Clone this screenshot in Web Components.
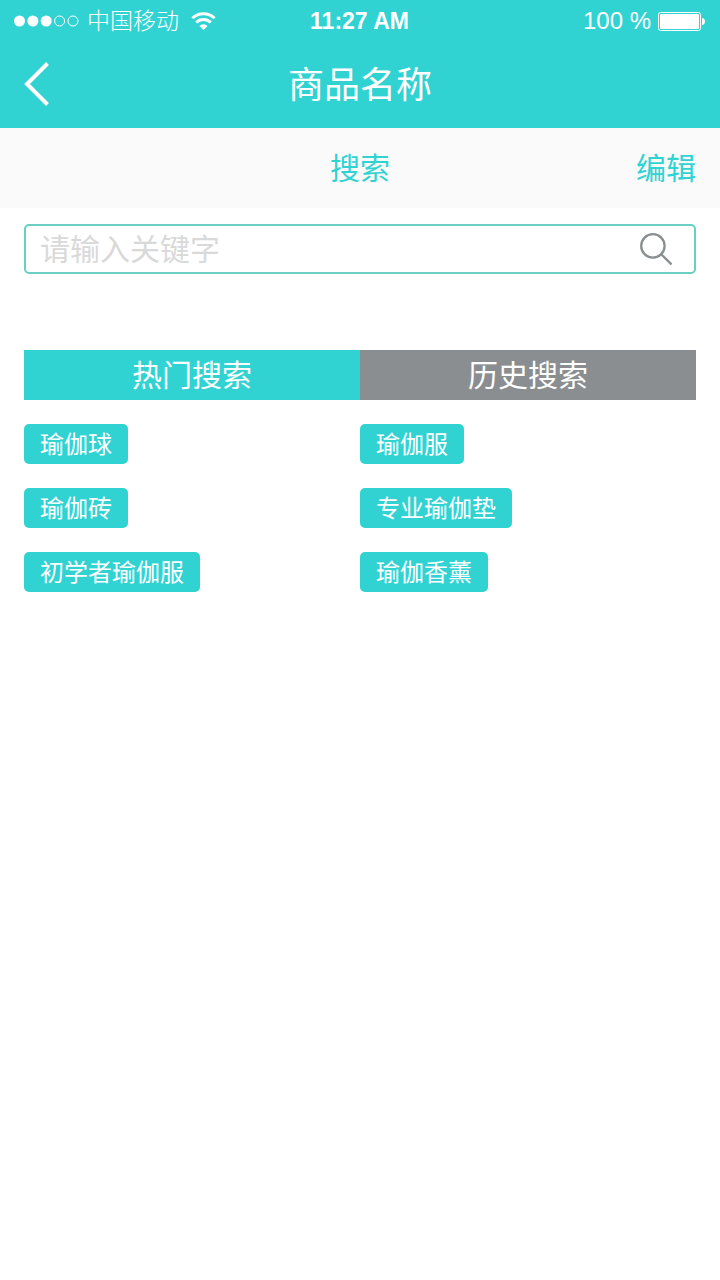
<!DOCTYPE html>
<html lang="zh-CN">
<head>
<meta charset="utf-8">
<meta name="viewport" content="width=device-width, initial-scale=1">
<title>商品名称</title>
<style>
  html { --brand: #30d3d2; --muted: #8a8e91; }
  body {
    margin: 0;
    background: #fff;
    font-family: "Liberation Sans", "Noto Sans CJK SC", sans-serif;
    font-weight: 400;
  }
</style>
</head>
<body>
<search-page></search-page>

<script>
const define = (name, html, setup) => {
  const template = document.createElement('template');
  template.innerHTML = '<style>*{box-sizing:border-box}</style>' + html;
  customElements.define(name, class extends HTMLElement {
    constructor() {
      super();
      this.attachShadow({ mode: 'open' }).append(template.content.cloneNode(true));
    }
    connectedCallback() { if (setup) setup(this, this.shadowRoot); }
  });
};

define('status-bar', `
  <style>
    :host { display: grid; grid-template-columns: 1fr auto 1fr; align-items: center; box-sizing: border-box;
      height: 40px; padding: 2px 15px 0 14px; background: var(--brand); color: #fff; font-size: 23px; line-height: 38px; }
    div { display: flex; align-items: center; }
    svg { display: block; flex: none; }
    .carrier { margin: 0 12px 0 8px; font-weight: 300; }
    .time { font-weight: 700; }
    .power { justify-content: flex-end; gap: 7px; font-size: 24px; }
  </style>
  <div>
    <svg width="65" height="12" viewBox="0 0 65 12" fill="#fff" aria-hidden="true">
      <circle cx="5.5" cy="6" r="5.5"/><circle cx="18.9" cy="6" r="5.5"/><circle cx="32.2" cy="6" r="5.5"/>
      <g fill="none" stroke="#fff"><circle cx="45.6" cy="6" r="5"/><circle cx="59" cy="6" r="5"/></g>
    </svg>
    <span class="carrier">中国移动</span>
    <svg width="25" height="18" viewBox="0 0 25 18" aria-hidden="true">
      <g fill="none" stroke="#fff" stroke-width="3">
        <path d="M1.400 6.200a15.800 15.800 0 0 1 22.200 0"/><path d="M5.200 10.500a10.400 10.400 0 0 1 14.600 0"/>
      </g>
      <path d="M12.5 18 8.4 14a5.8 5.8 0 0 1 8.200 0z" fill="#fff"/>
    </svg>
  </div>
  <span class="time">11:27 AM</span>
  <div class="power">
    <span>100 %</span>
    <svg width="47" height="19" viewBox="0 0 47 19" aria-hidden="true">
      <rect x=".5" y=".5" width="42" height="18" rx="2" fill="none" stroke="#fff"/>
      <rect x="2" y="2" width="39" height="15" rx="1" fill="#fff"/>
      <path d="M44 6c1.6 0 3 1.4 3 3.500S45.600 13 44 13z" fill="#fff"/>
    </svg>
  </div>`);

define('title-bar', `
  <style>
    :host { display: grid; grid-template-columns: 1fr auto 1fr; align-items: center;
      height: 88px; padding: 0 24px; background: var(--brand); color: #fff; }
    button { justify-self: start; padding: 0; border: 0; background: none; color: inherit; }
    svg { display: block; }
    h1 { margin: 0; padding-top: 4px; font-size: 36px; line-height: 84px; font-weight: inherit; }
  </style>
  <button type="button" aria-label="返回">
    <svg width="26" height="44" viewBox="0 0 26 44" fill="none" stroke="currentColor" stroke-width="4"><path d="M23.500 1.500 3 22l20.500 20.500"/></svg>
  </button>
  <h1><slot></slot></h1>`);

define('sub-bar', `
  <style>
    :host { display: grid; grid-template-columns: 1fr auto 1fr; align-items: center;
      height: 80px; padding: 0 24px; background: #fafafa; color: var(--brand); }
    h2 { grid-column: 2; margin: 0; padding-top: 2px; font-size: 30px; line-height: 78px; font-weight: inherit; }
    button { justify-self: end; padding: 2px 0 0; border: 0; background: none;
      font: inherit; font-size: 30px; line-height: 78px; color: inherit; }
  </style>
  <h2><slot></slot></h2>
  <button type="button"><slot name="action"></slot></button>`);

define('search-field', `
  <style>
    :host { display: block; }
    form { display: flex; align-items: center; height: 50px; padding: 0 22px 0 14px;
      border: 2px solid #68cfc3; border-radius: 5px; background: #fff; }
    input { flex: 1; min-width: 0; height: 46px; padding: 2px 0 0; border: 0; outline: 0; background: none;
      font: inherit; font-size: 30px; color: #555; }
    input::placeholder { color: #d9d9d9; opacity: 1; }
    button { padding: 0; border: 0; background: none; color: var(--muted); }
    svg { display: block; }
  </style>
  <form role="search">
    <input type="text" name="q" aria-label="关键字" placeholder="请输入关键字">
    <button type="button" aria-label="搜索">
      <svg width="32" height="32" viewBox="0 0 32 32" fill="none" stroke="currentColor" stroke-width="2.300">
        <circle cx="12.900" cy="12.900" r="11.700"/><path d="M21.200 21.200 31.500 31.500"/>
      </svg>
    </button>
  </form>`);

define('tag-group', `
  <style>
    :host { display: block; }
    h3 { margin: 0 0 24px; padding-top: 2px; background: var(--head, var(--brand)); color: #fff;
      font-size: 30px; line-height: 48px; font-weight: inherit; text-align: center; }
    div { display: flex; flex-direction: column; align-items: flex-start; gap: 24px; }
  </style>
  <h3><slot name="heading"></slot></h3>
  <div><slot></slot></div>`);

define('search-tag', `
  <style>
    :host { display: block; }
    a { display: block; height: 40px; padding: 2px 16px 0; border-radius: 5px; background: var(--brand);
      color: #fff; font-size: 24px; line-height: 38px; text-decoration: none; }
  </style>
  <a href="#"><slot></slot></a>`);

define('search-page', `
  <style>
    :host { display: block; }
    main { padding: 16px 24px 24px; }
    .groups { display: grid; grid-template-columns: 1fr 1fr; margin-top: 76px; }
    .history { --head: var(--muted); }
  </style>
  <status-bar></status-bar>
  <title-bar>商品名称</title-bar>
  <sub-bar>搜索<span slot="action">编辑</span></sub-bar>
  <main>
    <search-field></search-field>
    <div class="groups">
      <tag-group>
        <span slot="heading">热门搜索</span>
        <search-tag>瑜伽球</search-tag>
        <search-tag>瑜伽砖</search-tag>
        <search-tag>初学者瑜伽服</search-tag>
      </tag-group>
      <tag-group class="history">
        <span slot="heading">历史搜索</span>
        <search-tag>瑜伽服</search-tag>
        <search-tag>专业瑜伽垫</search-tag>
        <search-tag>瑜伽香薰</search-tag>
      </tag-group>
    </div>
  </main>`);
</script>
</body>
</html>
